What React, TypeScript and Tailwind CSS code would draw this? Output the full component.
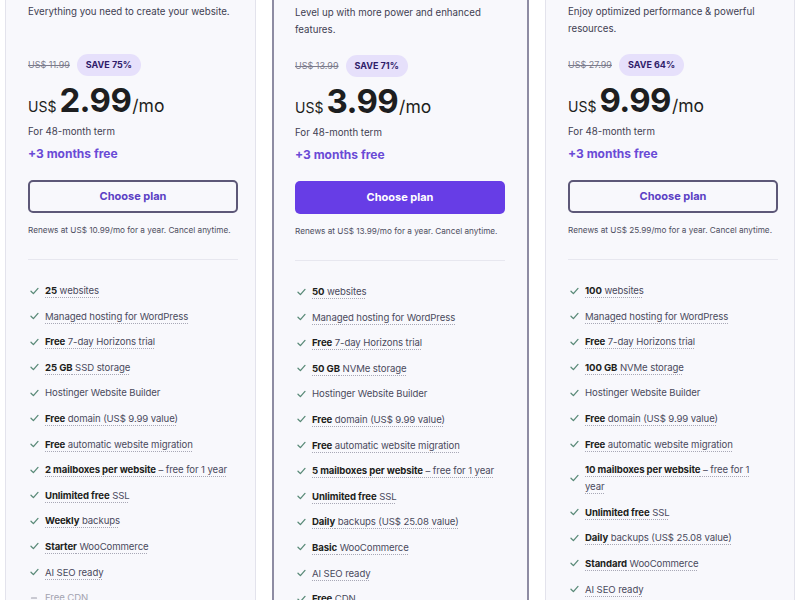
import React from "react";

type Feat = { b?: string; t?: string; tail?: string; br?: boolean; off?: boolean };

const Check = () => (
  <svg width="9" height="8" viewBox="0 0 9 8" className="shrink-0">
    <path d="M1 4.3 L3.4 6.6 L8 1.4" fill="none" stroke="#5a8a78" strokeWidth="1.3" strokeLinecap="round" strokeLinejoin="round" />
  </svg>
);

const Dash = () => (
  <svg width="9" height="8" viewBox="0 0 9 8" className="shrink-0">
    <path d="M1.5 4 L6.5 4" fill="none" stroke="#9a9aa8" strokeWidth="1.2" strokeLinecap="round" />
  </svg>
);

type Plan = {
  desc: string;
  old: string;
  save: string;
  price: string;
  renew: string;
  primary?: boolean;
  feats: Feat[];
};

const plans: Plan[] = [
  {
    desc: "Everything you need to create your website.",
    old: "US$ 11.99",
    save: "SAVE 75%",
    price: "2.99",
    renew: "Renews at US$ 10.99/mo for a year. Cancel anytime.",
    feats: [
      { b: "25", t: " websites" },
      { t: "Managed hosting for WordPress" },
      { b: "Free", t: " 7-day Horizons trial" },
      { b: "25 GB", t: " SSD storage" },
      { t: "Hostinger Website Builder", tail: "nou" },
      { b: "Free", t: " domain (US$ 9.99 value)" },
      { b: "Free", t: " automatic website migration" },
      { b: "2 mailboxes per website", t: " – free for 1 year" },
      { b: "Unlimited free", t: " SSL" },
      { b: "Weekly", t: " backups" },
      { b: "Starter", t: " WooCommerce" },
      { t: "AI SEO ready" },
      { t: "Free CDN", off: true },
    ],
  },
  {
    desc: "Level up with more power and enhanced features.",
    old: "US$ 13.99",
    save: "SAVE 71%",
    price: "3.99",
    renew: "Renews at US$ 13.99/mo for a year. Cancel anytime.",
    primary: true,
    feats: [
      { b: "50", t: " websites" },
      { t: "Managed hosting for WordPress" },
      { b: "Free", t: " 7-day Horizons trial" },
      { b: "50 GB", t: " NVMe storage" },
      { t: "Hostinger Website Builder", tail: "nou" },
      { b: "Free", t: " domain (US$ 9.99 value)" },
      { b: "Free", t: " automatic website migration" },
      { b: "5 mailboxes per website", t: " – free for 1 year" },
      { b: "Unlimited free", t: " SSL" },
      { b: "Daily", t: " backups (US$ 25.08 value)" },
      { b: "Basic", t: " WooCommerce" },
      { t: "AI SEO ready" },
      { b: "Free", t: " CDN" },
    ],
  },
  {
    desc: "Enjoy optimized performance & powerful resources.",
    old: "US$ 27.99",
    save: "SAVE 64%",
    price: "9.99",
    renew: "Renews at US$ 25.99/mo for a year. Cancel anytime.",
    feats: [
      { b: "100", t: " websites" },
      { t: "Managed hosting for WordPress" },
      { b: "Free", t: " 7-day Horizons trial" },
      { b: "100 GB", t: " NVMe storage" },
      { t: "Hostinger Website Builder", tail: "nou" },
      { b: "Free", t: " domain (US$ 9.99 value)" },
      { b: "Free", t: " automatic website migration" },
      { b: "10 mailboxes per website", t: " – free for 1", br: true },
      { b: "Unlimited free", t: " SSL" },
      { b: "Daily", t: " backups (US$ 25.08 value)" },
      { b: "Standard", t: " WooCommerce" },
      { t: "AI SEO ready" },
      { b: "Free", t: " CDN" },
    ],
  },
];

function Feature({ f }: { f: Feat }) {
  const noUnderline = f.tail === "nou";
  return (
    <li className="flex items-center gap-[6px] pl-[2px]">
      {f.off ? <Dash /> : <Check />}
      <span
        className={
          f.off
            ? "text-[#a3a3b0] whitespace-nowrap"
            : noUnderline
            ? "text-[#4a4a5c] whitespace-nowrap"
            : "text-[#4a4a5c] whitespace-nowrap underline decoration-dotted decoration-[#a8a8b6] underline-offset-[3px]"
        }
      >
        {f.b && <b className="font-bold text-[#1d1e20]">{f.b}</b>}
        {f.t}
        {f.br && (
          <>
            <br />
            year
          </>
        )}
      </span>
    </li>
  );
}

function Card({ p }: { p: Plan }) {
  return (
    <div
      className={
        p.primary
          ? "bg-[#f8f8fc] border-x-2 border-[#8e8ca3] pl-[21px] pt-[4px]"
          : "bg-[#f8f8fc] border-x border-[#e3e3ec] pl-[22px] pt-[3px]"
      }
    >
      <div className="w-[210px]">
        <p className="h-[34px] text-[9.7px] leading-[17px] text-[#3f3e52]">{p.desc}</p>
        <div className="mt-[17px] flex items-center gap-[7px] h-[22px]">
          <span className="text-[9px] text-[#7c7c8c] line-through">{p.old}</span>
          <span className="h-[22px] px-[9px] rounded-full bg-[#e6e0fb] text-[#2f1c6a] text-[9px] font-bold flex items-center">
            {p.save}
          </span>
        </div>
        <div className="mt-[8px] flex items-baseline leading-none text-[#1d1e20]">
          <span className="text-[14px] mr-[3px]">US$</span>
          <span className="text-[33px] font-bold tracking-[-0.6px]">{p.price}</span>
          <span className="text-[17.5px] ml-[1px]">/mo</span>
        </div>
        <p className="mt-[8px] text-[9.7px] leading-[14px] text-[#3f3e52]">For 48-month term</p>
        <p className="mt-[7px] text-[12px] leading-[16px] font-bold text-[#6a4bd6]">+3 months free</p>
        <button
          className={
            p.primary
              ? "mt-[18px] w-[210px] h-[33px] rounded-[5px] bg-[#673de6] text-white text-[11px] font-bold"
              : "mt-[18px] w-[210px] h-[33px] rounded-[5px] border-2 border-[#5d5878] text-[#5b3fc4] text-[11px] font-bold"
          }
        >
          Choose plan
        </button>
        <p className="mt-[11px] text-[8.2px] leading-[12px] text-[#4e4e60] whitespace-nowrap">{p.renew}</p>
        <div className="mt-[23px] h-px bg-[#e7e7ef]" />
        <ul className="mt-[22px] flex flex-col gap-[8.6px] text-[9.6px] leading-[17px] tracking-[-0.1px]">
          {p.feats.map((f, i) => (
            <Feature key={i} f={f} />
          ))}
        </ul>
      </div>
    </div>
  );
}

export default function App() {
  return (
    <div
      className="w-[800px] h-[600px] overflow-hidden bg-white pl-[5px]"
      style={{ fontFamily: "Inter, 'Noto Sans', sans-serif" }}
    >
      <div className="grid grid-cols-[251px_257px_250px] gap-[16px] h-full">
        {plans.map((p, i) => (
          <Card key={i} p={p} />
        ))}
      </div>
    </div>
  );
}
